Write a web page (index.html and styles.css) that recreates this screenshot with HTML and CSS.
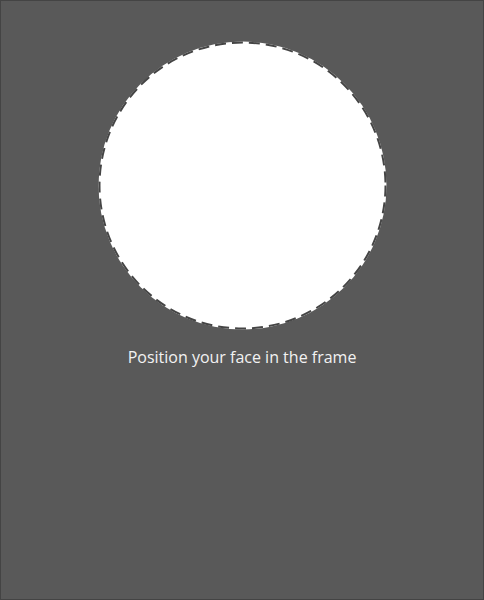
FILE: index.html
```html
<!DOCTYPE html>
<html>
<head>
<meta charset="utf-8">
<link rel="stylesheet" href="styles.css">
</head>
<body>
<main class="screen">
  <svg class="frame" width="289" height="289" viewBox="0 0 289 289">
    <circle cx="144.5" cy="144.5" r="144" fill="#ffffff"/>
    <circle cx="144.5" cy="144.5" r="143" fill="none" stroke="#454545" stroke-width="2" stroke-dasharray="11 6"/>
  </svg>
  <p class="hint">Position your face in the frame</p>
</main>
</body>
</html>
```
FILE: styles.css
```css
html, body {
  margin: 0;
  padding: 0;
  background: #595959;
}
.screen {
  box-sizing: border-box;
  width: 484px;
  height: 600px;
  border: 1px solid #444444;
  background: #595959;
  display: flex;
  flex-direction: column;
  align-items: center;
  padding-top: 40px;
}
.frame {
  display: block;
}
.hint {
  margin: 18px 0 0 0;
  color: #f2f2f2;
  font-family: "Open Sans", "Noto Sans", sans-serif;
  font-size: 16px;
  line-height: 18px;
}
```
